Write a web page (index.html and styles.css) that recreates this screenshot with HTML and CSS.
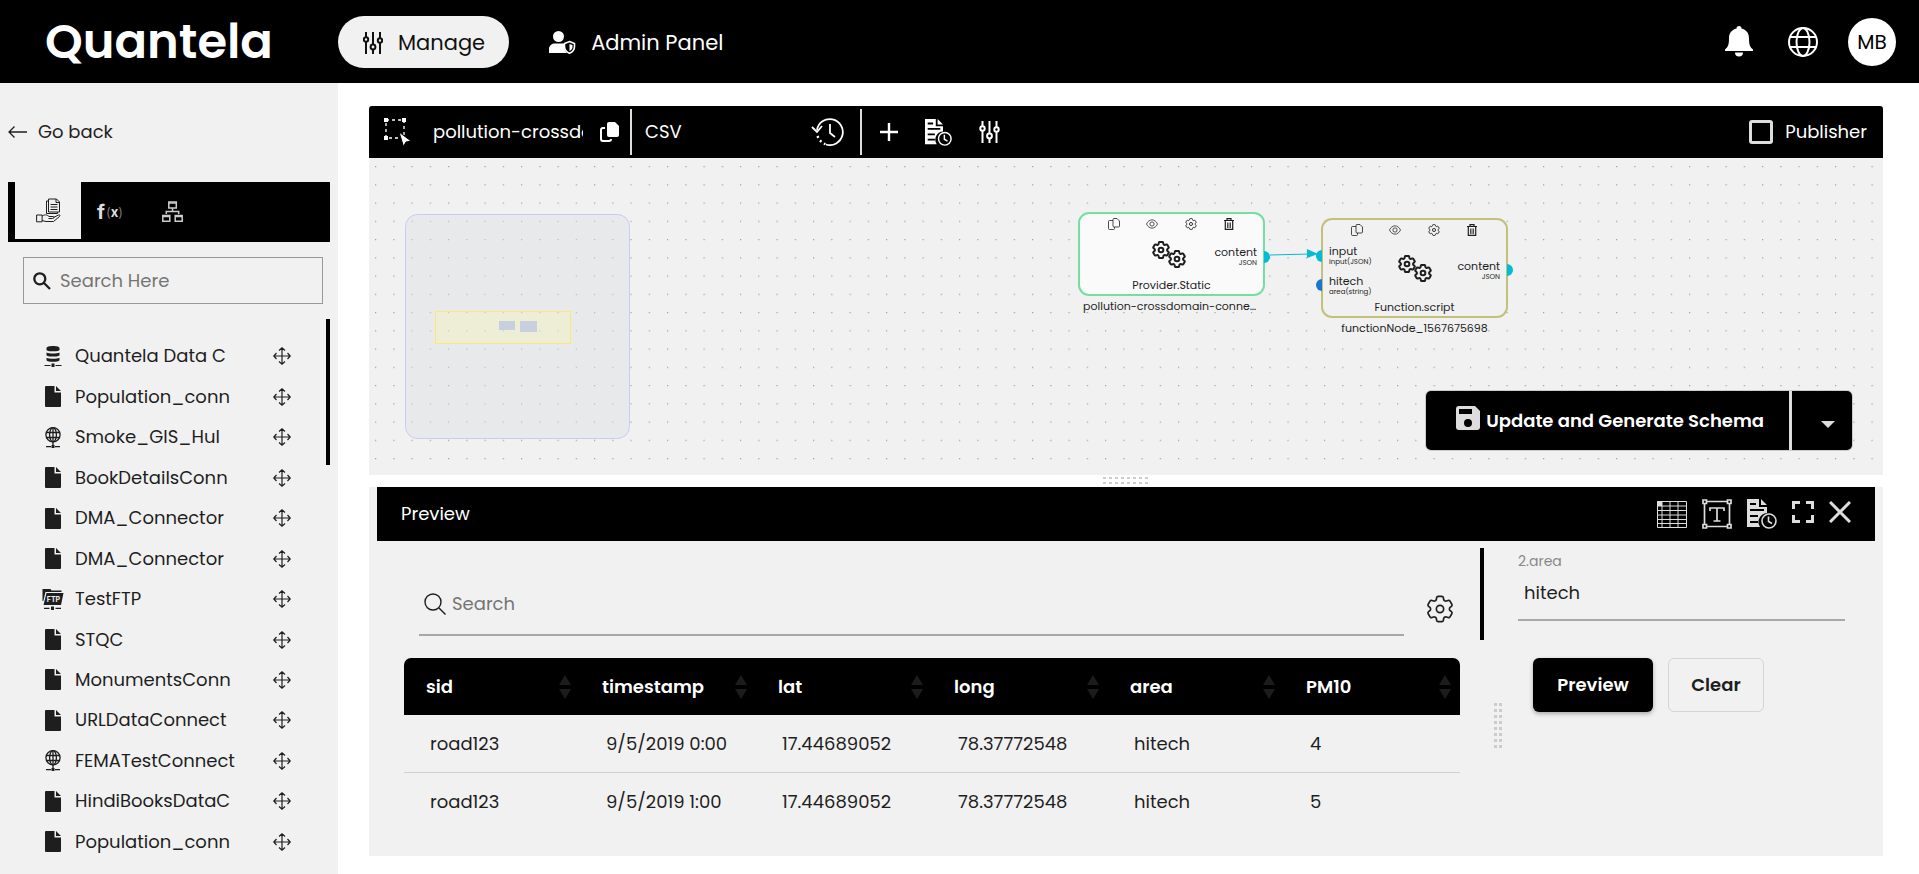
FILE: index.html
```html
<!DOCTYPE html>
<html lang="en">
<head>
    <meta charset="UTF-8">
    <meta name="viewport" content="width=device-width, initial-scale=1.0">
    <title>Quantela</title>
    <link rel="stylesheet" href="styles.css">
</head>
<body>

    <!-- Shared icons -->
    <svg class="sprite" aria-hidden="true">
        <symbol id="i-sliders" viewBox="0 0 20 22">
            <g fill="none" stroke="currentColor" stroke-width="2">
                <path d="M3 0v5M3 10v12M10 0v12M10 18v4M17 0v6M17 11v11"/>
                <circle cx="3" cy="7.5" r="2.2"/><circle cx="10" cy="15" r="2.4"/><circle cx="17" cy="8.5" r="2.2"/>
            </g>
        </symbol>
        <symbol id="i-gear" viewBox="2 2 20 20">
            <path fill="none" stroke="currentColor" stroke-width="var(--line, 1.4)" d="M9.594 3.94c.09-.542.56-.94 1.11-.94h2.593c.55 0 1.02.398 1.11.94l.213 1.281c.063.374.313.686.645.87.074.04.147.083.22.127.325.196.72.257 1.075.124l1.217-.456a1.125 1.125 0 0 1 1.37.49l1.296 2.247a1.125 1.125 0 0 1-.26 1.431l-1.003.827c-.293.241-.438.613-.43.992a7.723 7.723 0 0 1 0 .255c-.008.378.137.75.43.991l1.004.827c.424.35.534.955.26 1.43l-1.298 2.247a1.125 1.125 0 0 1-1.369.491l-1.217-.456c-.355-.133-.75-.072-1.076.124a6.47 6.47 0 0 1-.22.128c-.331.183-.581.495-.644.869l-.213 1.281c-.09.543-.56.94-1.11.94h-2.594c-.55 0-1.019-.398-1.11-.94l-.213-1.281c-.062-.374-.312-.686-.644-.87a6.52 6.52 0 0 1-.22-.127c-.325-.196-.72-.257-1.076-.124l-1.217.456a1.125 1.125 0 0 1-1.369-.49l-1.297-2.247a1.125 1.125 0 0 1 .26-1.431l1.004-.827c.292-.24.437-.613.43-.991a6.932 6.932 0 0 1 0-.255c.007-.38-.138-.751-.43-.992l-1.004-.827a1.125 1.125 0 0 1-.26-1.43l1.297-2.247a1.125 1.125 0 0 1 1.37-.491l1.216.456c.356.133.751.072 1.076-.124.072-.044.146-.086.22-.128.332-.183.582-.495.644-.869l.214-1.28Z"/>
            <circle cx="12" cy="12" r="2.6" fill="none" stroke="currentColor" stroke-width="var(--line, 1.4)"/>
        </symbol>
        <symbol id="i-gears" viewBox="0 0 34 27">
            <svg class="bold-gear" width="18" height="18"><use href="#i-gear"/></svg>
            <svg class="bold-gear" x="16" y="9" width="18" height="18"><use href="#i-gear"/></svg>
        </symbol>
        <symbol id="i-doc-clock" viewBox="0 0 30 30">
            <path fill="currentColor" d="M0 0h12v8h8v6a9 9 0 0 0-7 14H0zM14 0l6 6h-6z"/>
            <path stroke="#000" stroke-width="2" d="M3 5h6M3 11h14M3 17h8M3 23h8"/>
            <circle cx="22" cy="22" r="7" fill="#000" stroke="currentColor" stroke-width="1.6"/>
            <path d="M21.500 17.500v5l3.500 2" fill="none" stroke="currentColor" stroke-width="1.600"/>
        </symbol>
        <symbol id="i-file" viewBox="0 0 16 21">
            <path fill="currentColor" d="M1 0h8.500v6.500H16V20a1 1 0 0 1-1 1H1a1 1 0 0 1-1-1V1a1 1 0 0 1 1-1zM11 0l5 5h-5z"/>
        </symbol>
        <symbol id="i-db" viewBox="0 0 17 21">
            <path fill="currentColor" d="M2 2c0-2.700 13-2.700 13 0v2c0 1.800-13 1.800-13 0zM2 6.500c3 1.300 10 1.300 13 0v2.700c0 1.800-13 1.800-13 0zM2 11.800c3 1.300 10 1.300 13 0v2.400c-1 2-12 2-13 0zM7 17.500h3V21H7z"/>
            <path stroke="currentColor" stroke-width="1.200" d="M0 19.500h6M11 19.500h6"/>
        </symbol>
        <symbol id="i-globe-net" viewBox="0 0 17 21">
            <g fill="none" stroke="currentColor" stroke-width="1.300">
                <circle cx="8.500" cy="7.800" r="7.100"/><ellipse cx="8.500" cy="7.800" rx="3.400" ry="7.100"/>
                <path d="M8.500 1v17M1.500 5.500h14M1.500 10.500h14M1.500 19.600h5M10.500 19.600h5"/>
            </g>
            <path fill="currentColor" d="M7 18h3v3H7z"/>
        </symbol>
        <symbol id="i-move" viewBox="0 0 18 18">
            <path fill="none" stroke="currentColor" stroke-width="1.200" d="M9 .8v16.400M.8 9h16.400M6 3.500L9 .8l3 2.700M6 14.500l3 2.700 3-2.700M3.500 6L.8 9l2.700 3M14.500 6l2.700 3-2.700 3"/>
        </symbol>
        <symbol id="i-copy-line" viewBox="0 0 12 12">
            <path fill="none" stroke="currentColor" stroke-width=".8" d="M5 2.500H1.500a1 1 0 0 0-1 1v7a1 1 0 0 0 1 1h4a1 1 0 0 0 1-1V9M6 .5h3l2.500 2.500v5a1 1 0 0 1-1 1H6a1 1 0 0 1-1-1V1.500a1 1 0 0 1 1-1z"/>
        </symbol>
        <symbol id="i-eye" viewBox="0 0 13 12">
            <g fill="none" stroke="currentColor" stroke-width=".8"><path d="M.5 6c3-6 9-6 12 0-3 6-9 6-12 0z"/><circle cx="6.500" cy="6" r="2.300"/></g>
        </symbol>
        <symbol id="i-trash" viewBox="0 0 10 12">
            <path fill="none" stroke="currentColor" stroke-width="1.200" d="M0 2.500h10M3 2V.6h4V2M1.300 3v8.400h7.400V3"/>
            <path stroke="currentColor" stroke-width=".8" d="M3.500 4.500V10M5 4.500V10M6.500 4.500V10"/>
        </symbol>
        <symbol id="i-sort" viewBox="0 0 12 24">
            <path fill="currentColor" d="M6 0l6 10H0zM6 24l6-10H0z"/>
        </symbol>
    </svg>

    <header class="topbar">
        <a href="#" class="logo">Quantela</a>
        <nav class="main-nav">
            <a href="#" class="nav-link active">
                <svg width="20" height="22"><use href="#i-sliders"/></svg>
                Manage
            </a>
            <a href="#" class="nav-link">
                <svg width="27" height="23" viewBox="0 0 27 23">
                    <circle cx="9.500" cy="5.500" r="5.500" fill="#fff"/>
                    <path fill="#fff" d="M0 22v-4c0-3.500 3-5.500 6-5.500h9.500V16c0 3 1 5 2.500 6z"/>
                    <path fill="#000" stroke="#fff" stroke-width="1.600" d="M20.500 10.500l5 2v3c0 3-2 5.500-5 6.700-3-1.200-5-3.700-5-6.700v-3z"/>
                    <path fill="#fff" d="M20.500 13l3 1v2c0 1.700-1 3-3 4z"/>
                </svg>
                Admin Panel
            </a>
        </nav>
        <div class="user-tools">
            <button class="icon-btn bell" aria-label="Notifications">
                <svg width="28" height="31" viewBox="0 0 28 31" fill="#fff"><path d="M14 0a2.500 2.500 0 0 1 2.500 2.500C21 3.500 24 7 24 12c0 7 1 9 4 11.500V25H0v-1.500C3 21 4 19 4 12c0-5 3-8.500 7.500-9.500A2.500 2.500 0 0 1 14 0zM10 26.500h8a4 4 0 0 1-8 0z"/></svg>
            </button>
            <button class="icon-btn" aria-label="Language">
                <svg width="30" height="30" viewBox="0 0 30 30" fill="none" stroke="#fff" stroke-width="2"><circle cx="15" cy="15" r="14"/><ellipse cx="15" cy="15" rx="6.500" ry="14"/><path d="M2 10h26M2 20h26"/></svg>
            </button>
            <button class="avatar">MB</button>
        </div>
    </header>

    <div class="page">

        <!-- Sidebar -->
        <aside class="sidebar">
            <a href="#" class="go-back">
                <svg width="19" height="12" viewBox="0 0 19 12" fill="none" stroke="currentColor" stroke-width="1.300"><path d="M19 6H1M6.500 .5L1 6l5.500 5.500"/></svg>
                Go back
            </a>
            <div class="tabs">
                <button class="tab selected" aria-label="Providers">
                    <svg width="25" height="25" viewBox="0 0 25 25" fill="none" stroke="currentColor" stroke-width="1">
                        <path d="M12.500 1h8l3 3v10h-11zM20 1v3.500h3.500M12.500 3h-2v12.500h11V14M14.500 6.500h7M14.500 9h7M14.500 11.500h7M.6 17h5.500v6.800H.6zM6 18c4-2 5-1 7 .5h4c1.500 0 1.500 2-.5 2h-4M17.500 19.500l5-2.500c1.500-.5 2 .5 1 1.500l-6 5H10l-4-1"/>
                    </svg>
                </button>
                <button class="tab fx" aria-label="Functions"><b>f</b><small>(<b>x</b>)</small></button>
                <button class="tab" aria-label="Flows">
                    <svg width="21" height="21" viewBox="0 0 21 21" fill="none" stroke="#ccc" stroke-width="1.500"><path d="M6.800 1h7.500v6H6.800zM.8 14.500h7v5.700h-7zM13.200 14.500h7v5.700h-7zM10.500 7v3M4.300 13v-2.500h12.400V13"/><path d="M6.800 2h7.500M.8 15.500h7M13.200 15.500h7"/></svg>
                </button>
            </div>
            <label class="side-search">
                <svg width="18" height="18" viewBox="0 0 18 18" fill="none" stroke="#1e1e1e" stroke-width="2.300"><circle cx="6.800" cy="6.800" r="5.500"/><path d="M11 11l6 6"/></svg>
                <input type="text" placeholder="Search Here" aria-label="Search Here">
            </label>
            <div class="list-wrap">
                <ul class="connector-list">
                    <li><svg class="type"><use href="#i-db"/></svg><span>Quantela Data C</span><svg class="move"><use href="#i-move"/></svg></li>
                    <li><svg class="type"><use href="#i-file"/></svg><span>Population_conn</span><svg class="move"><use href="#i-move"/></svg></li>
                    <li><svg class="type"><use href="#i-globe-net"/></svg><span>Smoke_GIS_Hul</span><svg class="move"><use href="#i-move"/></svg></li>
                    <li><svg class="type"><use href="#i-file"/></svg><span>BookDetailsConn</span><svg class="move"><use href="#i-move"/></svg></li>
                    <li><svg class="type"><use href="#i-file"/></svg><span>DMA_Connector</span><svg class="move"><use href="#i-move"/></svg></li>
                    <li><svg class="type"><use href="#i-file"/></svg><span>DMA_Connector</span><svg class="move"><use href="#i-move"/></svg></li>
                    <li>
                        <svg class="type" viewBox="0 0 21 21">
                            <path fill="currentColor" d="M0 0h8l1 1.500h10V3H3L.8 12H0zM4 4h17l-2.500 12H1zM8.500 17.500h3V21h-3zM1.500 18.800H7v1.200H1.500zM13 18.800h5.500v1.200H13z"/>
                            <text x="11" y="12.500" class="ftp-text">FTP</text>
                        </svg>
                        <span>TestFTP</span><svg class="move"><use href="#i-move"/></svg>
                    </li>
                    <li><svg class="type"><use href="#i-file"/></svg><span>STQC</span><svg class="move"><use href="#i-move"/></svg></li>
                    <li><svg class="type"><use href="#i-file"/></svg><span>MonumentsConn</span><svg class="move"><use href="#i-move"/></svg></li>
                    <li><svg class="type"><use href="#i-file"/></svg><span>URLDataConnect</span><svg class="move"><use href="#i-move"/></svg></li>
                    <li><svg class="type"><use href="#i-globe-net"/></svg><span>FEMATestConnect</span><svg class="move"><use href="#i-move"/></svg></li>
                    <li><svg class="type"><use href="#i-file"/></svg><span>HindiBooksDataC</span><svg class="move"><use href="#i-move"/></svg></li>
                    <li><svg class="type"><use href="#i-file"/></svg><span>Population_conn</span><svg class="move"><use href="#i-move"/></svg></li>
                </ul>
                <div class="scroll-thumb"></div>
            </div>
        </aside>

        <main class="content">

            <!-- Flow editor -->
            <div class="toolbar">
                <div class="tool-name">
                    <svg width="28" height="28" viewBox="0 0 28 28"><path fill="none" stroke="#fff" stroke-width="1.300" stroke-dasharray="3 3" d="M2 2h18v18H2z"/><path fill="#fff" d="M0 0h4v4H0zM18 0h4v4h-4zM0 18h4v4H0z"/><path fill="#fff" stroke="#000" d="M15 14l12 9-5 1-2.500 4.500z"/></svg>
                    <input type="text" value="pollution-crossdomain-connector" aria-label="Flow name">
                    <button class="icon-btn" aria-label="Copy name">
                        <svg width="20" height="20" viewBox="0 0 20 20"><path fill="none" stroke="#fff" stroke-width="2" d="M5 6H3a2 2 0 0 0-2 2v9a2 2 0 0 0 2 2h6a2 2 0 0 0 2-2"/><path fill="#fff" d="M9 0h6l4 4v9a2 2 0 0 1-2 2H9a2 2 0 0 1-2-2V2a2 2 0 0 1 2-2z"/></svg>
                    </button>
                </div>
                <div class="tool-format">
                    <select aria-label="Format"><option>CSV</option><option>JSON</option></select>
                    <button class="icon-btn" aria-label="History">
                        <svg width="33" height="28" viewBox="0 0 33 28" fill="none" stroke="#fff" stroke-width="1.800"><path d="M6 12A13 13 0 1 1 15 26.500"/><path d="M1 9l5 5 5-6M19 6v9l5 4"/><path stroke-dasharray="2 3" stroke-width="2.400" d="M6.500 18c1.500 4 4.500 7 8 8.200"/></svg>
                    </button>
                </div>
                <div class="tool-actions">
                    <button class="icon-btn" aria-label="Add"><svg width="18" height="18" viewBox="0 0 18 18" stroke="#fff" stroke-width="2.400"><path d="M9 0v18M0 9h18"/></svg></button>
                    <button class="icon-btn" aria-label="Logs"><svg width="27" height="27"><use href="#i-doc-clock"/></svg></button>
                    <button class="icon-btn" aria-label="Settings"><svg width="21" height="22"><use href="#i-sliders"/></svg></button>
                </div>
                <label class="publisher"><input type="checkbox"> Publisher</label>
            </div>

            <section class="canvas">
                <svg class="grid">
                    <defs>
                        <pattern id="dots" x="6" y="8" width="18.250" height="18.250" patternUnits="userSpaceOnUse">
                            <rect width="1.200" height="1.200" fill="#a0a0a0"/>
                        </pattern>
                    </defs>
                    <rect width="100%" height="100%" fill="url(#dots)"/>
                    <path d="M901 97l40-1" stroke="#00bcd4" stroke-width="1.200"/>
                    <path d="M938 91l11 5-11 4z" fill="#00bcd4"/>
                </svg>

                <svg class="minimap" viewBox="0 0 225 225">
                    <rect x=".5" y=".5" width="224" height="224" rx="12" fill="#d9dfe0" fill-opacity=".4" stroke="#cacaf6"/>
                    <rect x="30.500" y="97.500" width="135" height="32" fill="#ffff96" fill-opacity=".25" stroke="#ffe678"/>
                    <path fill="#c8d0e0" d="M94 107h16v9H94zM115 107h17v11h-17z"/>
                </svg>

                <div class="node node-provider">
                    <div class="node-tools">
                        <svg><use href="#i-copy-line"/></svg><svg><use href="#i-eye"/></svg><svg><use href="#i-gear"/></svg><svg><use href="#i-trash"/></svg>
                    </div>
                    <div class="node-body">
                        <div class="ports"></div>
                        <svg class="gears"><use href="#i-gears"/></svg>
                        <div class="ports out"><p>content<small>JSON</small></p></div>
                    </div>
                    <div class="node-type">Provider.Static</div>
                    <i class="port port-right"></i>
                    <div class="node-label">pollution-crossdomain-connector</div>
                </div>

                <div class="node node-function">
                    <div class="node-tools">
                        <svg><use href="#i-copy-line"/></svg><svg><use href="#i-eye"/></svg><svg><use href="#i-gear"/></svg><svg><use href="#i-trash"/></svg>
                    </div>
                    <div class="node-body">
                        <div class="ports"><p>input<small>input(JSON)</small></p><p>hitech<small>area(string)</small></p></div>
                        <svg class="gears"><use href="#i-gears"/></svg>
                        <div class="ports out"><p>content<small>JSON</small></p></div>
                    </div>
                    <div class="node-type">Function.script</div>
                    <i class="port port-left"></i>
                    <i class="port port-left port-blue"></i>
                    <i class="port port-right"></i>
                    <div class="node-label">functionNode_1567675698</div>
                </div>

                <div class="save-group">
                    <button class="save-main">
                        <svg width="24" height="24" viewBox="0 0 24 24"><path fill="#ddd" d="M3 0h16l5 5v16a3 3 0 0 1-3 3H3a3 3 0 0 1-3-3V3a3 3 0 0 1 3-3z"/><path d="M3 3h13v5H3z"/><circle cx="12" cy="17" r="4"/></svg>
                        Update and Generate Schema
                    </button>
                    <button class="save-more" aria-label="More options"><svg width="14" height="7" viewBox="0 0 14 7"><path fill="#ddd" d="M0 0h14L7 7z"/></svg></button>
                </div>
            </section>

            <div class="splitter"><i class="grip"></i></div>

            <!-- Preview -->
            <section class="preview">
                <div class="preview-head">
                    <h2>Preview</h2>
                    <button class="icon-btn" aria-label="Table view"><svg width="30" height="27" viewBox="0 0 30 27"><path fill="none" stroke="#ddd" d="M.5.5h29v26H.5zM0 5h30M0 9.500h30M0 14h30M0 18.500h30M0 22.500h30M5 0v27M13 0v27M21 0v27"/><path fill="#ddd" d="M0 0h5v5H0z"/></svg></button>
                    <button class="icon-btn" aria-label="Text view"><svg width="30" height="30" viewBox="0 0 30 30" fill="none" stroke="#ddd" stroke-width="1.700"><path d="M5 2.500h20M5 27.500h20M2.500 5v20M27.500 5v20M1 1h3.500v3.500H1zM25.500 1H29v3.500h-3.500zM1 25.500h3.500V29H1zM25.500 25.500H29V29h-3.500zM8 12V9h14v3M15 9v13M11.500 22h7"/></svg></button>
                    <button class="icon-btn" aria-label="Logs"><svg class="soft" width="30" height="30"><use href="#i-doc-clock"/></svg></button>
                    <button class="icon-btn window-btn" aria-label="Full screen"><svg width="22" height="22" viewBox="0 0 22 22" fill="none" stroke="#ddd" stroke-width="3"><path d="M1.500 8V1.500H8M14 1.500h6.500V8M20.500 14v6.500H14M8 20.500H1.500V14"/></svg></button>
                    <button class="icon-btn window-btn" aria-label="Close"><svg width="22" height="22" viewBox="0 0 22 22" stroke="#ddd" stroke-width="3"><path d="M1 1l20 20M21 1L1 21"/></svg></button>
                </div>
                <div class="preview-body">
                    <div class="data">
                        <div class="data-tools">
                            <label class="data-search">
                                <svg width="22" height="22" viewBox="0 0 22 22" fill="none" stroke="#1e1e1e" stroke-width="1.400"><circle cx="9" cy="9" r="8"/><path d="M15 15l6.500 6.500"/></svg>
                                <input type="text" placeholder="Search" aria-label="Search">
                            </label>
                            <button class="icon-btn cog" aria-label="Table settings"><svg width="28" height="28"><use href="#i-gear"/></svg></button>
                        </div>
                        <table>
                            <thead>
                                <tr>
                                    <th><div>sid <svg><use href="#i-sort"/></svg></div></th>
                                    <th><div>timestamp <svg><use href="#i-sort"/></svg></div></th>
                                    <th><div>lat <svg><use href="#i-sort"/></svg></div></th>
                                    <th><div>long <svg><use href="#i-sort"/></svg></div></th>
                                    <th><div>area <svg><use href="#i-sort"/></svg></div></th>
                                    <th><div>PM10 <svg><use href="#i-sort"/></svg></div></th>
                                </tr>
                            </thead>
                            <tbody>
                                <tr><td>road123</td><td>9/5/2019 0:00</td><td>17.44689052</td><td>78.37772548</td><td>hitech</td><td>4</td></tr>
                                <tr><td>road123</td><td>9/5/2019 1:00</td><td>17.44689052</td><td>78.37772548</td><td>hitech</td><td>5</td></tr>
                            </tbody>
                        </table>
                    </div>
                    <div class="side-rail"><i class="bar"></i><i class="grip vertical"></i></div>
                    <form class="params">
                        <label for="area">2.area</label>
                        <input type="text" id="area" value="hitech">
                        <div class="param-buttons">
                            <button type="button" class="btn-preview">Preview</button>
                            <button type="button" class="btn-clear">Clear</button>
                        </div>
                    </form>
                </div>
            </section>
        </main>
    </div>

</body>
</html>
```
FILE: styles.css
```css
* {
    box-sizing: border-box;
}

body {
    margin: 0;
    min-height: 100vh;
    display: flex;
    flex-direction: column;
    font-family: Poppins, Inter, sans-serif;
    font-size: 18px;
    line-height: 24px;
    color: #1e1e1e;
    background: #fff;
}

a {
    color: inherit;
    text-decoration: none;
}

button,
input,
select {
    font: inherit;
    color: inherit;
    border: none;
    background: none;
    padding: 0;
    margin: 0;
    outline: none;
    border-radius: 0;
}

button {
    cursor: pointer;
}

svg {
    display: block;
    flex: none;
}

.sprite {
    position: absolute;
    width: 0;
    height: 0;
}

.icon-btn {
    display: flex;
    flex: none;
}

/* Top bar */
.topbar {
    display: flex;
    align-items: center;
    height: 83px;
    padding-right: 23px;
    background: #000;
    color: #fff;
}

.logo {
    width: 338px;
    padding-left: 45px;
    font-size: 48px;
    line-height: 60px;
    font-weight: 600;
}

.main-nav {
    display: flex;
    gap: 15px;
    font-size: 21px;
}

.nav-link {
    display: flex;
    align-items: center;
    gap: 15px;
    height: 52px;
    padding: 2px 24px 0 25px;
    border-radius: 26px;
}

.nav-link.active {
    background: #f1f1f1;
    color: #111;
}

.user-tools {
    display: flex;
    align-items: center;
    gap: 30px;
    margin-left: auto;
}

.bell {
    margin-right: 5px;
}

.avatar {
    width: 48px;
    height: 48px;
    border-radius: 50%;
    background: #fff;
    color: #000;
    font-size: 20px;
}

/* Page */
.page {
    flex: 1;
    display: flex;
}

.sidebar {
    display: flex;
    flex-direction: column;
    flex: none;
    width: 338px;
    padding: 37px 8px 12px;
    background: #f1f1f1;
}

.go-back {
    display: flex;
    align-items: center;
    gap: 11px;
}

.tabs {
    display: flex;
    height: 60px;
    margin-top: 38px;
    padding: 0 0 3px 7px;
    background: #000;
}

.tab {
    display: flex;
    align-items: center;
    justify-content: center;
    width: 62px;
    padding: 2px 4px 0 0;
    color: #ccc;
}

.tab.selected {
    width: 66px;
    padding: 0;
    background: #f1f1f1;
    color: #1e1e1e;
}

.fx {
    gap: 1px;
    font-family: Inter, sans-serif;
    font-size: 20px;
    color: #ddd;
}

.fx small {
    font-size: 13px;
    line-height: 18px;
    color: #777;
}

.fx small b {
    color: #ddd;
}

.side-search {
    display: flex;
    align-items: center;
    gap: 9px;
    height: 47px;
    margin: 15px 7px 0 15px;
    padding: 0 9px;
    border: 1px solid #999;
}

.side-search input,
.data-search input {
    flex: 1;
    min-width: 0;
}

::placeholder {
    color: #757575;
    opacity: 1;
}

.list-wrap {
    display: flex;
    flex: 1;
    margin-top: 15px;
}

.connector-list {
    display: flex;
    flex: 1;
    flex-direction: column;
    margin: 0;
    padding: 17px 35px 0 34px;
    list-style: none;
}

.connector-list li {
    display: flex;
    flex: 1;
    align-items: center;
    gap: 11px;
    min-height: 40px;
}

.connector-list span {
    flex: 1;
}

.type {
    width: 22px;
    height: 21px;
}

.move {
    width: 18px;
    height: 18px;
}

.ftp-text {
    font: 700 7px Inter, sans-serif;
    text-anchor: middle;
    fill: #f1f1f1;
}

.scroll-thumb {
    width: 4px;
    height: 146px;
    background: #000;
}

.content {
    display: flex;
    flex: 1;
    flex-direction: column;
    min-width: 0;
    padding: 23px 36px 18px 31px;
}

/* Editor toolbar */
.toolbar {
    display: flex;
    align-items: center;
    height: 52px;
    padding: 0 16px 0 15px;
    border-radius: 3px 3px 0 0;
    background: #000;
    color: #fff;
}

.tool-name,
.tool-format {
    display: flex;
    align-items: center;
    height: 46px;
    border-right: 2px solid #ddd;
}

.tool-name {
    width: 248px;
}

.tool-name input {
    width: 150px;
    margin: 0 17px 0 21px;
}

.tool-format {
    width: 230px;
    padding: 0 16px 0 13px;
}

.tool-format select {
    flex: 1;
    appearance: none;
}

.tool-actions {
    display: flex;
    align-items: center;
    gap: 27px;
    padding-left: 18px;
}

.publisher {
    display: flex;
    align-items: center;
    gap: 12px;
    margin-left: auto;
}

.publisher input {
    appearance: none;
    width: 24px;
    height: 24px;
    border: 3px solid #ddd;
    border-radius: 3px;
}

/* Canvas */
.canvas {
    position: relative;
    height: 317px;
    background: #f1f1f1;
    overflow: hidden;
}

.grid {
    position: absolute;
    inset: 0;
    width: 100%;
    height: 100%;
}

.minimap {
    position: absolute;
    left: 36px;
    top: 56px;
    width: 225px;
    height: 225px;
}

.node {
    position: absolute;
    width: 187px;
    padding: 4px 6px;
    border: 2px solid #74dfa0;
    border-radius: 11px;
    background: #fafafa;
    font-size: 11px;
    line-height: 12px;
}

.node-provider {
    left: 709px;
    top: 54px;
    height: 84px;
}

.node-function {
    left: 952px;
    top: 60px;
    height: 100px;
    border-color: #c4bf7a;
    background: #f1f1f1;
}

.node-tools {
    display: flex;
    justify-content: space-between;
    padding: 0 22px;
}

.node-tools svg {
    width: 12px;
    height: 12px;
    --line: 1.5;
}

.node-body {
    display: flex;
    align-items: center;
    height: 49px;
}

.node-function .node-body {
    height: 65px;
}

.ports {
    flex: 1;
    padding-top: 4px;
}

.ports p {
    margin: 0 0 8px;
}

.ports p:last-child {
    margin: 0;
}

.ports small {
    display: block;
    font-size: 7px;
    line-height: 10px;
}

.out {
    text-align: right;
}

.gears {
    width: 34px;
    height: 27px;
}

.node-provider .gears {
    margin-right: 6px;
}

.bold-gear {
    --line: 2.2;
}

.node-type {
    text-align: center;
}

.node-label {
    position: absolute;
    left: 3px;
    right: 3px;
    top: calc(100% + 5px);
    overflow: hidden;
    text-align: center;
    text-overflow: ellipsis;
    white-space: nowrap;
    line-height: 14px;
}

.port {
    position: absolute;
    width: 6px;
    height: 12px;
    top: 37px;
    background: #00bcd4;
}

.port-left {
    left: -7px;
    top: 30px;
    border-radius: 6px 0 0 6px;
}

.port-right {
    right: -7px;
    border-radius: 0 6px 6px 0;
}

.node-function .port-right {
    top: 44px;
}

.port-blue {
    top: 59px;
    background: #1976d2;
}

.save-group {
    position: absolute;
    right: 30px;
    bottom: 24px;
    display: flex;
    gap: 3px;
    height: 61px;
    border: 1px solid #ccc;
    border-radius: 6px;
    background: #ddd;
    overflow: hidden;
    color: #fff;
}

.save-main {
    display: flex;
    align-items: center;
    gap: 6px;
    padding: 0 25px 0 30px;
    background: #000;
    font-weight: 600;
}

.save-main svg {
    margin-bottom: 6px;
}

.save-more {
    display: flex;
    align-items: center;
    justify-content: center;
    width: 60px;
    padding: 8px 0 0 12px;
    background: #000;
}

/* Splitters */
.splitter {
    display: flex;
    justify-content: center;
    height: 12px;
    padding: 2px 4px 0 0;
}

.grip {
    width: 48px;
    height: 10px;
    background: conic-gradient(from 90deg at 50% 50%, transparent 75%, #ccc 0) 0 0 / 6px 5px;
}

.grip.vertical {
    width: 10px;
    height: 48px;
    margin: 63px 0 0 12px;
    background-size: 5px 6px;
}

/* Preview */
.preview {
    display: flex;
    flex: 1;
    flex-direction: column;
    padding: 0 8px;
    background: #f1f1f1;
}

.preview-head {
    display: flex;
    align-items: center;
    gap: 15px;
    height: 54px;
    padding: 0 24px;
    background: #000;
    color: #fff;
}

.preview-head h2 {
    flex: 1;
    margin: 0;
    font-size: 18px;
    font-weight: 400;
}

.soft {
    color: #ddd;
}

.window-btn {
    padding-bottom: 4px;
}

.preview-body {
    display: flex;
}

.data {
    flex: 1;
    padding: 37px 20px 0 27px;
}

.data-tools {
    display: flex;
    align-items: center;
    gap: 22px;
    padding: 0 6px 0 15px;
}

.data-search {
    display: flex;
    flex: 1;
    align-items: center;
    gap: 6px;
    height: 58px;
    padding: 0 5px 4px;
    border-bottom: 2px solid #a8a8a8;
}

.cog {
    padding-top: 3px;
    --line: 1.2;
}

table {
    width: 100%;
    margin-top: 22px;
    table-layout: fixed;
    border-spacing: 0;
}

th {
    height: 57px;
    padding: 0 9px 0 22px;
    background: #000;
    color: #fff;
    font-weight: 600;
    text-align: left;
}

th:first-child {
    border-radius: 7px 0 0 0;
}

th:last-child {
    border-radius: 0 7px 0 0;
}

th div {
    display: flex;
    align-items: center;
    justify-content: space-between;
}

th svg {
    width: 12px;
    height: 24px;
    color: #1c1c1c;
}

td {
    height: 58px;
    padding: 0 0 0 26px;
    border-bottom: 1px solid #d0d0d0;
}

tr:last-child td {
    border-bottom: none;
}

.side-rail {
    width: 38px;
    padding-top: 7px;
}

.side-rail i {
    display: block;
}

.bar {
    width: 4px;
    height: 92px;
    background: #000;
}

.params {
    display: flex;
    flex-direction: column;
    width: 357px;
    padding: 10px 30px 0 0;
}

.params label {
    font-size: 14px;
    line-height: 20px;
    color: #888;
}

.params input {
    height: 50px;
    padding: 0 6px 6px;
    border-bottom: 2px solid #a8a8a8;
}

.param-buttons {
    display: flex;
    gap: 15px;
    padding: 37px 15px;
}

.btn-preview,
.btn-clear {
    width: 120px;
    height: 54px;
    border-radius: 6px;
    font-weight: 600;
}

.btn-preview {
    background: #000;
    color: #fff;
    box-shadow: 0 2px 4px rgba(0, 0, 0, 0.3);
}

.btn-clear {
    width: 96px;
    border: 1px solid #d5d5d5;
}
```
